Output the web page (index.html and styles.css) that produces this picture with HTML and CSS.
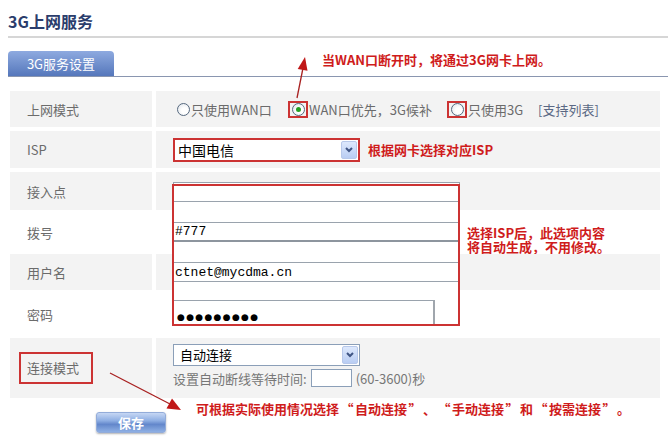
FILE: index.html
```html
<!DOCTYPE html>
<html lang="zh-CN">
<head>
<meta charset="utf-8">
<title>3G上网服务</title>
<link rel="stylesheet" href="styles.css">
</head>
<body>
<div class="page">
  <h1 class="title">3G上网服务</h1>
  <div class="rule"></div>
  <div class="tabbar">
    <div class="tab">3G服务设置</div>
    <div class="note note-top">当WAN口断开时，将通过3G网卡上网。</div>
  </div>

  <div class="form">
    <div class="row gray h36">
      <div class="lbl">上网模式</div>
      <div class="val radios">
        <span class="opt opt1"><span class="radio"></span>只使用WAN口</span>
        <span class="opt opt2"><span class="mark"><span class="radio on"></span></span>WAN口优先，3G候补</span>
        <span class="opt opt3"><span class="mark"><span class="radio"></span></span>只使用3G</span>
        <a class="link">[支持列表]</a>
      </div>
    </div>

    <div class="row gray h37">
      <div class="lbl">ISP</div>
      <div class="val">
        <div class="select select-isp">
          <span class="sel-text">中国电信</span>
          <span class="drop"><svg width="8" height="6" viewBox="0 0 8 6"><path d="M1 1l3 3 3-3" stroke="#3f5585" stroke-width="2" fill="none"/></svg></span>
        </div>
        <span class="note note-isp">根据网卡选择对应ISP</span>
      </div>
    </div>

    <div class="row gray h38">
      <div class="lbl">接入点</div>
      <div class="val top">
        <div class="strip s-apn"><input class="inp" type="text" value="" readonly></div>
      </div>
    </div>

    <div class="row h36">
      <div class="lbl">拨号</div>
      <div class="val top">
        <div class="strip s-full"><input class="inp inp-dial" type="text" value="#777" readonly></div>
        <div class="note note-auto">
          <div class="note-line">选择ISP后，此选项内容</div>
          <div class="note-line">将自动生成，不用修改。</div>
        </div>
      </div>
    </div>

    <div class="row gray h36">
      <div class="lbl">用户名</div>
      <div class="val top">
        <div class="strip s-full"><input class="inp" type="text" value="ctnet@mycdma.cn" readonly></div>
      </div>
    </div>

    <div class="row h40">
      <div class="lbl">密码</div>
      <div class="val top">
        <div class="pwd"><span class="dots">●●●●●●●●●</span></div>
      </div>
    </div>

    <div class="row gray h60">
      <div class="lbl lbl-boxed"><span class="boxed">连接模式</span></div>
      <div class="val col">
        <div class="select select-mode">
          <span class="sel-text sel-small">自动连接</span>
          <span class="drop"><svg width="8" height="6" viewBox="0 0 8 6"><path d="M1 1l3 3 3-3" stroke="#3f5585" stroke-width="2" fill="none"/></svg></span>
        </div>
        <div class="wait">设置自动断线等待时间:<input class="time" type="text" value="" readonly>(60-3600)秒</div>
      </div>
    </div>
  </div>

  <div class="footer">
    <button class="btn" type="button">保存</button>
    <span class="note note-mode">可根据实际使用情况选择<span class="q">“</span>自动连接<span class="q">”</span>、<span class="q">“</span>手动连接<span class="q">”</span>和<span class="q">“</span>按需连接<span class="q">”</span>。</span>
  </div>

  <div class="hl-box"></div>
  <svg class="arrows" width="668" height="442" viewBox="0 0 668 442">
    <line x1="297" y1="98" x2="303" y2="68" stroke="#a82020" stroke-width="1.3"/>
    <polygon points="305,57 297.7,69 307.5,70.8" fill="#c01818"/>
    <line x1="110" y1="373" x2="170" y2="404" stroke="#a82020" stroke-width="1.3"/>
    <polygon points="181,410 166.5,408.5 172,398.5" fill="#c01818"/>
  </svg>
</div>
</body>
</html>
```

FILE: styles.css
```css
* {
  box-sizing: border-box;
  margin: 0;
  padding: 0;
}

html, body {
  background: #fff;
}

body {
  width: 668px;
  height: 442px;
  overflow: hidden;
  font-family: "Noto Sans CJK SC", "Noto Sans", sans-serif;
  font-size: 13px;
  color: #6b6b6b;
}

.page {
  position: relative;
  height: 442px;
  padding: 11px 0 0 8px;
}

.title {
  font-size: 16px;
  line-height: 20px;
  font-weight: 700;
  color: #2b3d6c;
}

.rule {
  height: 2px;
  background: #d6d6d6;
  margin-top: 5px;
}

.tabbar {
  display: flex;
  align-items: flex-start;
  margin-top: 13px;
  height: 26px;
  border-bottom: 1px solid #8a96b0;
}

.tab {
  flex: none;
  width: 106px;
  height: 25px;
  background: linear-gradient(#8eaae0, #5577bb);
  border-radius: 4px 4px 0 0;
  color: #fff;
  font-size: 13px;
  line-height: 25px;
  text-align: center;
}

.note {
  color: #cf1c1c;
  font-weight: 700;
  font-size: 13px;
  line-height: 13px;
  white-space: nowrap;
}

.note-top {
  margin-left: 208px;
  margin-top: 2px;
}

/* form table */
.form {
  margin-top: 14px;
  margin-left: 2px;
  width: 650px;
  display: flex;
  flex-direction: column;
  gap: 4px;
}

.row {
  display: flex;
  gap: 4px;
}

.h36 { height: 36px; }
.h37 { height: 37px; }
.h38 { height: 38px; }
.h40 { height: 40px; }
.h60 { height: 60px; }

.lbl {
  flex: none;
  width: 142px;
  padding-left: 17px;
  display: flex;
  align-items: center;
}

.val {
  flex: 1;
  padding-left: 17px;
  display: flex;
  align-items: center;
}

.val.top {
  align-items: flex-start;
}

.val.col {
  flex-direction: column;
  align-items: flex-start;
  padding-top: 6px;
}

.gray > .lbl,
.gray > .val {
  background: #f3f3f3;
}

/* radios */
.radios {
  padding-left: 21px;
}

.opt {
  flex: none;
  display: flex;
  align-items: center;
  white-space: nowrap;
}

.opt1 { width: 111px; }
.opt2 { width: 159px; }
.opt3 { width: 91px; }

.radio {
  display: inline-block;
  width: 13px;
  height: 13px;
  border-radius: 50%;
  border: 1px solid #56697f;
  background: radial-gradient(circle at 60% 60%, #fff 30%, #dde2e8 100%);
  margin-right: 1px;
  position: relative;
}

.radio.on::after {
  content: "";
  position: absolute;
  left: 3px;
  top: 3px;
  width: 5px;
  height: 5px;
  border-radius: 50%;
  background: #23a023;
}

.mark {
  flex: none;
  width: 20px;
  height: 17px;
  border: 2px solid #cc3333;
  display: flex;
  align-items: center;
  justify-content: center;
  margin-right: 1px;
}

.mark .radio {
  margin-right: 0;
}

.link {
  color: #5a6884;
  white-space: nowrap;
}

/* selects */
.select {
  flex: none;
  width: 187px;
  height: 24px;
  border: 1px solid #7f9db9;
  background: #fff;
  display: flex;
  align-items: center;
  justify-content: space-between;
  padding: 0 1px 0 4px;
}

.select-isp {
  border: 2px solid #cc3333;
  padding: 0 1px 0 3px;
}

.select-mode {
  height: 22px;
  border-color: #8b9fb8;
}

.sel-text {
  color: #000;
  font-size: 14px;
  line-height: 16px;
}

.sel-small {
  font-size: 13px;
  padding-left: 2px;
}

.drop {
  width: 16px;
  height: 18px;
  border: 1px solid #b7c8ea;
  border-radius: 2px;
  background: linear-gradient(#dde8fc, #b9cdf3);
  display: flex;
  align-items: center;
  justify-content: center;
}

.note-isp {
  margin-left: 8px;
}

/* input column */
.strip {
  flex: none;
  width: 287px;
  background: #fff;
}

.s-apn {
  margin-top: 10px;
  height: 28px;
}

.s-full {
  height: 100%;
  padding-top: 8px;
}

.inp {
  display: block;
  width: 287px;
  height: 20px;
  border: 1px solid #9aa3ad;
  background: #fff;
  padding: 0 1px;
  font-family: "Liberation Mono", monospace;
  font-size: 13px;
  color: #000;
  outline: none;
}

.inp-dial {
  border-bottom: 2px solid #8d959e;
}

.note-auto {
  margin-left: 7px;
  margin-top: 12px;
  display: flex;
  flex-direction: column;
}

.note-line {
  height: 14px;
  line-height: 14px;
}

.pwd {
  flex: none;
  margin-top: 6px;
  width: 262px;
  height: 26px;
  border: 1px solid #9aa3ad;
  border-right: 2px solid #a0a6ad;
  border-bottom: none;
  background: #fff;
  padding: 4px 0 0 3px;
}

.dots {
  font-family: "DejaVu Sans", sans-serif;
  font-size: 9px;
  line-height: 14px;
  letter-spacing: 1.3px;
  color: #000;
}

/* connection mode */
.lbl-boxed {
  padding-left: 9px;
}

.boxed {
  display: block;
  width: 74px;
  height: 32px;
  border: 2px solid #cc3333;
  padding: 6px 0 0 6px;
  line-height: 16px;
}

.wait {
  margin-top: 3px;
  display: flex;
  align-items: center;
  height: 18px;
  color: #777;
  white-space: nowrap;
}

.time {
  width: 41px;
  height: 18px;
  margin: 0 4px;
  border: 1px solid #8b9fb8;
  background: #fff;
  outline: none;
}

/* footer */
.footer {
  display: flex;
  align-items: flex-start;
  padding-left: 88px;
}

.btn {
  flex: none;
  margin-top: 14px;
  width: 70px;
  height: 21px;
  border: 1px solid #93acd9;
  border-radius: 3px;
  background: linear-gradient(#c6d7f4, #8eaee3 40%, #6387cb 60%, #8fb0e4);
  box-shadow: 0 1px 2px rgba(0, 0, 0, 0.3);
  color: #fff;
  font-family: "Noto Sans CJK SC", sans-serif;
  font-size: 13px;
  font-weight: 700;
  line-height: 19px;
}

.note-mode {
  margin-left: 30px;
  margin-top: 4px;
}

.q {
  display: inline-block;
  width: 16px;
  text-align: center;
}

/* annotation overlays */
.hl-box {
  position: absolute;
  left: 172px;
  top: 184px;
  width: 288px;
  height: 142px;
  border: 2px solid #cc3333;
  pointer-events: none;
}

.arrows {
  position: absolute;
  left: 0;
  top: 0;
  pointer-events: none;
}
```
